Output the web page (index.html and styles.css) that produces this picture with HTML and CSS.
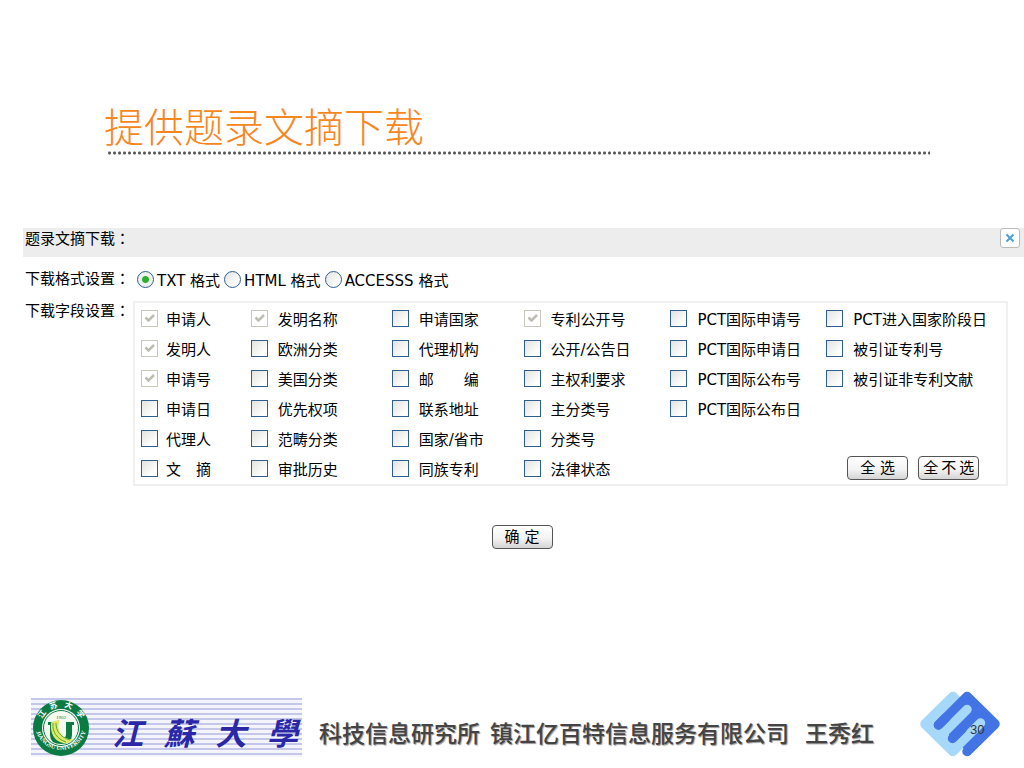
FILE: index.html
```html
<!DOCTYPE html>
<html lang="zh-CN">
<head>
<meta charset="utf-8">
<title>提供题录文摘下载</title>
<link rel="stylesheet" href="styles.css">
</head>
<body>
<div class="slide">
  <h1 class="title">提供题录文摘下载</h1>

  <form class="panel">
    <header class="panel-head">
      <h2 class="panel-title">题录文摘下载<span class="colon" lang="zh-TW">：</span></h2>
      <button type="button" class="close" aria-label="关闭">
        <svg viewBox="0 0 10 10" width="10" height="10"><path d="M1.500 1.500 8.500 8.500M8.500 1.500 1.500 8.500" stroke="#4a9fd8" stroke-width="2" fill="none"/></svg>
      </button>
    </header>

    <div class="row formats" role="radiogroup" aria-labelledby="fmt">
      <span class="row-label" id="fmt">下载格式设置<span class="colon" lang="zh-TW">：</span></span>
      <div class="radios">
        <label class="radio"><input type="radio" name="format" checked>TXT 格式</label>
        <label class="radio"><input type="radio" name="format">HTML 格式</label>
        <label class="radio"><input type="radio" name="format">ACCESSS 格式</label>
      </div>
    </div>

    <div class="row fields" role="group" aria-labelledby="fld">
      <span class="row-label" id="fld">下载字段设置<span class="colon" lang="zh-TW">：</span></span>
      <div class="field-box">
        <div class="col first">
          <label class="check"><input type="checkbox" checked disabled>申请人</label>
          <label class="check"><input type="checkbox" checked disabled>发明人</label>
          <label class="check"><input type="checkbox" checked disabled>申请号</label>
          <label class="check"><input type="checkbox">申请日</label>
          <label class="check"><input type="checkbox">代理人</label>
          <label class="check"><input type="checkbox">文　摘</label>
        </div>
        <div class="col">
          <label class="check"><input type="checkbox" checked disabled>发明名称</label>
          <label class="check"><input type="checkbox">欧洲分类</label>
          <label class="check"><input type="checkbox">美国分类</label>
          <label class="check"><input type="checkbox">优先权项</label>
          <label class="check"><input type="checkbox">范畴分类</label>
          <label class="check"><input type="checkbox">审批历史</label>
        </div>
        <div class="col">
          <label class="check"><input type="checkbox">申请国家</label>
          <label class="check"><input type="checkbox">代理机构</label>
          <label class="check"><input type="checkbox">邮　　编</label>
          <label class="check"><input type="checkbox">联系地址</label>
          <label class="check"><input type="checkbox">国家/省市</label>
          <label class="check"><input type="checkbox">同族专利</label>
        </div>
        <div class="col">
          <label class="check"><input type="checkbox" checked disabled>专利公开号</label>
          <label class="check"><input type="checkbox">公开/公告日</label>
          <label class="check"><input type="checkbox">主权利要求</label>
          <label class="check"><input type="checkbox">主分类号</label>
          <label class="check"><input type="checkbox">分类号</label>
          <label class="check"><input type="checkbox">法律状态</label>
        </div>
        <div class="col">
          <label class="check"><input type="checkbox">PCT国际申请号</label>
          <label class="check"><input type="checkbox">PCT国际申请日</label>
          <label class="check"><input type="checkbox">PCT国际公布号</label>
          <label class="check"><input type="checkbox">PCT国际公布日</label>
        </div>
        <div class="col">
          <label class="check"><input type="checkbox">PCT进入国家阶段日</label>
          <label class="check"><input type="checkbox">被引证专利号</label>
          <label class="check"><input type="checkbox">被引证非专利文献</label>
          <div class="picks">
            <button type="button" class="btn">全 选</button>
            <button type="button" class="btn">全&thinsp;不&thinsp;选</button>
          </div>
        </div>
      </div>
    </div>

    <div class="submit"><button type="submit" class="btn">确 定</button></div>
  </form>

  <footer class="foot">
    <div class="school">
      <svg class="seal" viewBox="0 0 58 58" width="58" height="58" role="img" aria-label="Jiangsu University">
        <defs>
          <path id="arcBottom" d="M3 25a26 26 0 1 0 52 0"/>
        </defs>
        <circle cx="29" cy="29" r="28" fill="#0b7a43"/>
        <circle cx="29" cy="29" r="19" fill="#fff"/>
        <circle cx="29" cy="29" r="17.500" fill="#f4faf0" stroke="#0b7a43" stroke-width="1"/>
        <path d="M16 23h8v12q0 5 5 5t5-5V23h8v3h-2v10q0 9-11 9T18 36V26h-2z" fill="#0b7a43"/>
        <path d="M19 24c-1 10 3 18 12 20 5 1 8-1 10-4-8 1-12-4-14-9-1-3-1-6 1-10-5 1-8 1-9 3z" fill="#dfe86a"/>
        <path d="M21 24c-1 9 4 16 13 19M24 24c0 8 4 14 14 17" stroke="#5aa832" stroke-width="1" fill="none"/>
        <text class="seal-year" x="29" y="20" text-anchor="middle">1902</text>
        <g class="seal-cn" text-anchor="middle">
          <text x="29" y="8" transform="rotate(-54 29 29)">江</text>
          <text x="29" y="8" transform="rotate(-19 29 29)">苏</text>
          <text x="29" y="8" transform="rotate(19 29 29)">大</text>
          <text x="29" y="8" transform="rotate(54 29 29)">学</text>
        </g>
        <text class="seal-en"><textPath href="#arcBottom" startOffset="50%" text-anchor="middle">JIANGSU UNIVERSITY</textPath></text>
      </svg>
      <div class="school-name" lang="zh-TW"><span>江</span><span>蘇</span><span>大</span><span>學</span></div>
    </div>
    <p class="credit"><span>科技信息研究所</span><span>镇江亿百特信息服务有限公司</span><span class="author">王秀红</span></p>
    <div class="mark">
      <svg viewBox="0 0 80 66" width="80" height="66" aria-hidden="true">
        <g stroke-width="9.500" stroke-linecap="round" stroke-linejoin="round">
          <path d="M33 5.500 5 33 33 60.500 60 33Z" fill="#a6d8fa" stroke="#a6d8fa"/>
          <path d="M18.500 34 47 5.500 75 33 47 60.500" fill="#4274e6" stroke="#4274e6"/>
          <path d="M47 18.500 24 41.500M60.500 32 38 54.500" fill="none" stroke="#a6d8fa"/>
          <path d="M18.500 34 26 26.500M32.500 47.500 42 38" fill="none" stroke="#4274e6"/>
        </g>
      </svg>
      <span class="page">30</span>
    </div>
  </footer>
</div>
</body>
</html>
```
FILE: styles.css
```css
* { box-sizing: border-box; }

body {
  margin: 0;
  background: #fff;
  color: #000;
  font: 15px/30px "DejaVu Sans", "Noto Sans CJK SC", sans-serif;
}

.slide {
  display: flex;
  flex-direction: column;
  min-height: 100vh;
  padding-top: 101px;
}

.title {
  margin: 0 94px 0 104px;
  color: #f6871f;
  font: 300 40px/48px "Noto Sans CJK SC", sans-serif;
}
.title::after {
  content: "";
  display: block;
  height: 4px;
  margin: 2px 0 0 3px;
  background: radial-gradient(circle, #555 1px, transparent 2px) 0 0 / 5px 4px repeat-x;
}

.panel { margin: 73px 0 0 23px; }

.panel-head {
  display: flex;
  justify-content: space-between;
  align-items: flex-start;
  height: 29px;
  padding: 0 4px 0 2px;
  background: #ededed;
}

.panel-title { margin: 0; font: inherit; line-height: 22px; }
.colon { font-family: "Noto Sans CJK TC", sans-serif; line-height: 1; }

.close {
  display: flex;
  align-items: center;
  justify-content: center;
  width: 20px;
  height: 20px;
  padding: 0;
  border: 1px solid #bbb;
  border-radius: 3px;
  background: #fff;
}

.row { display: flex; padding-left: 2px; }
.row-label { flex: none; width: 108px; white-space: nowrap; line-height: 20px; }

.formats { margin-top: 12px; }
.radios { display: flex; gap: 4px; padding-left: 4px; line-height: 24px; }
.radio { display: flex; align-items: center; gap: 3px; white-space: nowrap; }

input {
  appearance: none;
  flex: none;
  width: 17px;
  height: 17px;
  margin: 0 0 3px;
  border: 1px solid #2f5f90;
  background: linear-gradient(135deg, #e2e2de, #fff 80%);
}
input[type="radio"] { border-radius: 50%; }
input[type="radio"]:checked {
  background: radial-gradient(circle, #2fae2f 3px, #eef2ee 4px);
}
input:disabled {
  border-color: #cac8bb;
  background: #fff url("data:image/svg+xml,%3Csvg xmlns='http://www.w3.org/2000/svg' viewBox='0 0 15 15'%3E%3Cpath d='M3.500 6.500 6.500 9.500 12 4' stroke='%23bdbdb2' stroke-width='2.500' fill='none'/%3E%3C/svg%3E");
}

.fields { margin-top: 8px; padding-right: 16px; }
.field-box {
  flex: 1;
  display: grid;
  grid-template-columns: 110fr 141fr 132fr 147fr 156fr 180fr;
  padding: 1px 0 0 6px;
  border: 2px solid #f0f0f0;
}
.col { display: flex; flex-direction: column; }
.check {
  display: flex;
  align-items: center;
  gap: 10px;
  height: 30px;
  padding-top: 2px;
  white-space: nowrap;
}
.first .check { gap: 8px; }

.picks { display: flex; gap: 10px; margin-top: auto; padding: 0 0 4px 21px; }

.btn {
  width: 61px;
  height: 24px;
  padding: 0;
  border: 1px solid #555;
  border-radius: 4px;
  background: linear-gradient(#fff, #f4f4f4 55%, #d4d4d4);
  color: #000;
  font: inherit;
  line-height: 22px;
  white-space: nowrap;
}

.submit { display: flex; justify-content: center; margin-top: 39px; padding-right: 3px; }

.foot {
  display: flex;
  align-items: flex-end;
  margin-top: auto;
  padding: 0 24px 11px 31px;
}

.school {
  flex: none;
  display: flex;
  align-items: center;
  width: 271px;
  height: 59px;
  padding-left: 1px;
  background: repeating-linear-gradient(#c5c7ea 0 2px, #f3f4fc 2px 5px);
}
.seal { flex: none; }
.seal text { fill: #fff; }
.seal .seal-cn { font: bold 8px "Noto Sans CJK SC", sans-serif; }
.seal .seal-en { font: bold 6px "Liberation Serif", serif; }
.seal .seal-year { font: 5px "Liberation Serif", serif; fill: #0b7a43; }
.school-name {
  flex: 1;
  display: flex;
  justify-content: space-between;
  padding: 8px 4px 0 22px;
  color: #2a27a8;
  font: italic bold 31px/40px "Noto Sans CJK TC", sans-serif;
}

.credit {
  flex: 1;
  display: flex;
  gap: 10px;
  margin: 0 0 9px 17px;
  color: #444;
  font: 500 23px/32px "Noto Sans CJK SC", sans-serif;
  text-shadow: 1px 1px 1px #999;
  white-space: nowrap;
}
.author { margin-left: 6px; }

.mark { position: relative; flex: none; width: 80px; height: 66px; }
.mark svg { display: block; }
.page {
  position: absolute;
  left: 50px;
  top: 32px;
  color: #333;
  font: 13px/14px "Liberation Sans", sans-serif;
}
```
